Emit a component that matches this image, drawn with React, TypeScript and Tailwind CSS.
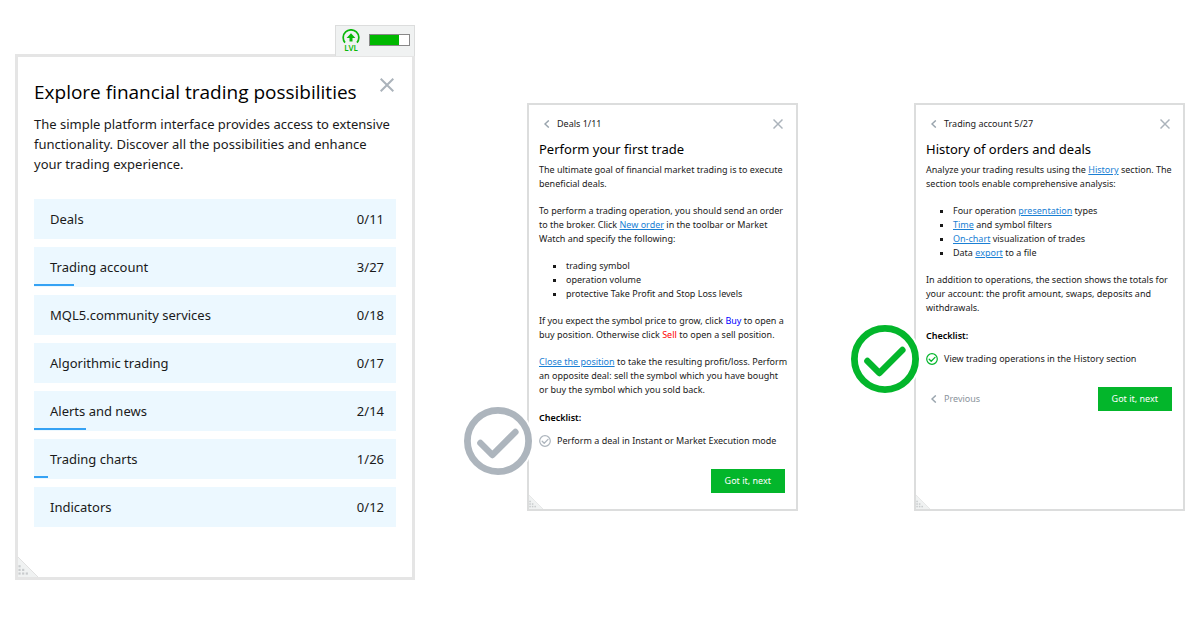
import { ReactNode } from 'react';

interface Topic {
  title: string;
  done: number;
  total: number;
}

const topics: Topic[] = [
  { title: 'Deals', done: 0, total: 11 },
  { title: 'Trading account', done: 3, total: 27 },
  { title: 'MQL5.community services', done: 0, total: 18 },
  { title: 'Algorithmic trading', done: 0, total: 17 },
  { title: 'Alerts and news', done: 2, total: 14 },
  { title: 'Trading charts', done: 1, total: 26 },
  { title: 'Indicators', done: 0, total: 12 },
];

function CloseIcon({ className }: { className: string }) {
  return (
    <svg className={className} viewBox="0 0 14 14" fill="none" stroke="#abb3bb" strokeWidth="2">
      <path d="M0.7 0.7l12.6 12.6M13.3 0.7L0.7 13.3" />
    </svg>
  );
}

function BackIcon() {
  return (
    <svg className="w-2 h-2 shrink-0" viewBox="0 0 8 8" fill="none" stroke="#9aa5ae" strokeWidth="1.4">
      <path d="M5.8 0.4L2 4l3.8 3.6" />
    </svg>
  );
}

function Grip({ className }: { className: string }) {
  return (
    <svg className={className} viewBox="0 0 22 22">
      <path d="M0 0l22 22H0z" fill="#f0f2f2" />
      <path d="M0 0l22 22" stroke="#dedede" />
      <g fill="#c8cbcd">
        <rect x="0.5" y="9" width="2.4" height="2.4" />
        <rect x="0.5" y="13" width="2.4" height="2.4" />
        <rect x="4.5" y="13" width="2.4" height="2.4" />
        <rect x="0.5" y="17" width="2.4" height="2.4" />
        <rect x="4.5" y="17" width="2.4" height="2.4" />
        <rect x="8.5" y="17" width="2.4" height="2.4" />
      </g>
    </svg>
  );
}

function CheckItem({ done, children }: { done: boolean; children: ReactNode }) {
  const color = done ? '#03b62b' : '#adb5bd';
  return (
    <li className="relative flex items-center gap-[6px]">
      <svg className="absolute -left-[77px] top-1/2 -translate-y-1/2 w-[72px] h-[72px]" viewBox="0 0 72 72" fill="none">
        <circle cx="36" cy="36" r="36" fill="#fff" />
        <circle cx="36" cy="36" r="30.6" stroke={color} strokeWidth="6.8" />
        <path d="M18.4 38l12 12 23-23" stroke={color} strokeWidth="6.4" strokeLinecap="round" strokeLinejoin="round" />
      </svg>
      <svg className="w-3 h-3 shrink-0" viewBox="0 0 12 12" fill="none" stroke={color}>
        <circle cx="6" cy="6" r="5.3" strokeWidth="1.2" />
        <path d="M3.2 6.3l2 2 3.8-3.9" strokeWidth="1.3" strokeLinecap="round" strokeLinejoin="round" />
      </svg>
      <span>{children}</span>
    </li>
  );
}

function TextLink({ children }: { children: ReactNode }) {
  return (
    <a href="#" className="text-[#1a7fd4] underline">
      {children}
    </a>
  );
}

function NextButton() {
  return (
    <button type="button" className="ml-auto h-6 px-[14px] bg-[#03b62b] text-white">
      Got it, next
    </button>
  );
}

interface LessonProps {
  section: string;
  title: string;
  children: ReactNode;
}

function Lesson({ section, title, children }: LessonProps) {
  return (
    <section className="relative flex-[271] min-w-0 border-2 border-[#dcdddd] pl-[10px] pr-[7px] pt-[11px] pb-4 text-[9px] leading-[14px] text-[#1a1a1a]">
      <div className="flex items-center justify-between h-4 pl-1 pr-[6px]">
        <button type="button" className="flex items-center gap-[6px]">
          <BackIcon />
          {section}
        </button>
        <button type="button" aria-label="Close">
          <CloseIcon className="w-[10px] h-[10px]" />
        </button>
      </div>
      <h2 className="mt-[7px] mb-1 text-[13px] leading-5 text-black">{title}</h2>
      {children}
      <Grip className="absolute left-0 bottom-0 w-[14px] h-[14px]" />
    </section>
  );
}

export default function App() {
  return (
    <main className="flex items-start bg-white px-[15px] pt-[25px] pb-12 font-['Noto_Sans',sans-serif]">
      <section className="flex-[400] min-w-0 flex flex-col">
        <div className="self-end relative z-10 -mb-[2px] flex items-center gap-[9px] h-[31px] w-20 pl-[6px] border border-b-0 border-[#dcdddd] bg-[#f0f2f2]">
          <svg className="w-[18px] h-6 shrink-0" viewBox="0 0 18 24" fill="none">
            <path d="M3 13.6A7.8 7.8 0 1 1 15 13.6" stroke="#0ab80a" strokeWidth="1.7" />
            <path d="M9 4.2l4.4 4.8h-2.9v3.6H7.5V9H4.6z" fill="#0ab80a" />
            <text x="9" y="21.6" textAnchor="middle" fontSize="8" fontWeight="600" fill="#0ab80a">
              LVL
            </text>
          </svg>
          <div className="w-[41px] h-3 mb-[2px] border border-[#888] bg-white">
            <div className="w-[29px] h-full bg-[#00b800]" />
          </div>
        </div>
        <div className="relative border-3 border-[#e5e5e5] px-4 pt-[21px] pb-[50px]">
          <div className="flex items-start justify-between">
            <h1 className="font-['Open_Sans',sans-serif] text-[19px] leading-7 text-black">
              Explore financial trading possibilities
            </h1>
            <button type="button" aria-label="Close" className="mr-[2px]">
              <CloseIcon className="w-[14px] h-[14px]" />
            </button>
          </div>
          <p className="mt-2 text-[13px] leading-5 text-[#1a1a1a]">
            The simple platform interface provides access to extensive functionality. Discover all the possibilities and
            enhance your trading experience.
          </p>
          <ul className="mt-[25px] flex flex-col gap-2 text-[13px]">
            {topics.map((topic) => (
              <li key={topic.title}>
                <button
                  type="button"
                  className="relative flex items-center justify-between w-full h-10 pl-4 pr-3 pt-px bg-[#ecf8ff] text-[#1a1a1a]"
                >
                  <span>{topic.title}</span>
                  <span>
                    {topic.done}/{topic.total}
                  </span>
                  <span
                    className="absolute left-0 bottom-px h-[2px] bg-[#35a2f4]"
                    style={{ width: `${(topic.done / topic.total) * 100}%` }}
                  />
                </button>
              </li>
            ))}
          </ul>
          <Grip className="absolute left-0 bottom-0 w-5 h-5" />
        </div>
      </section>

      <div className="flex-[658] min-w-0 ml-28 mt-[78px] flex gap-[116px]">
        <Lesson section="Deals 1/11" title="Perform your first trade">
          <div className="flex flex-col gap-[13px]">
            <p>The ultimate goal of financial market trading is to execute beneficial deals.</p>
            <p>
              To perform a trading operation, you should send an order to the broker. Click <TextLink>New order</TextLink>{' '}
              in the toolbar or Market Watch and specify the following:
            </p>
            <ul className="pl-[27px] list-[square]">
              <li>trading symbol</li>
              <li>operation volume</li>
              <li>protective Take Profit and Stop Loss levels</li>
            </ul>
            <p>
              If you expect the symbol price to grow, click <span className="text-[#0000ff]">Buy</span> to open a buy
              position. Otherwise click <span className="text-[#ff0000]">Sell</span> to open a sell position.
            </p>
            <p>
              <TextLink>Close the position</TextLink> to take the resulting profit/loss. Perform an opposite deal: sell
              the symbol which you have bought or buy the symbol which you sold back.
            </p>
          </div>
          <h3 className="mt-[14px] font-semibold text-black">Checklist:</h3>
          <ul className="mt-[9px]">
            <CheckItem done={false}>Perform a deal in Instant or Market Execution mode</CheckItem>
          </ul>
          <div className="mt-[21px] mr-1 flex items-center">
            <NextButton />
          </div>
        </Lesson>

        <Lesson section="Trading account 5/27" title="History of orders and deals">
          <div className="flex flex-col gap-[13px]">
            <p>
              Analyze your trading results using the <TextLink>History</TextLink> section. The section tools enable
              comprehensive analysis:
            </p>
            <ul className="pl-[27px] list-[square]">
              <li>
                Four operation <TextLink>presentation</TextLink> types
              </li>
              <li>
                <TextLink>Time</TextLink> and symbol filters
              </li>
              <li>
                <TextLink>On-chart</TextLink> visualization of trades
              </li>
              <li>
                Data <TextLink>export</TextLink> to a file
              </li>
            </ul>
            <p>
              In addition to operations, the section shows the totals for your account: the profit amount, swaps, deposits
              and withdrawals.
            </p>
          </div>
          <h3 className="mt-[14px] font-semibold text-black">Checklist:</h3>
          <ul className="mt-[9px]">
            <CheckItem done>View trading operations in the History section</CheckItem>
          </ul>
          <div className="mt-[21px] mr-1 flex items-center">
            <button type="button" className="flex items-center gap-[6px] pl-1 text-[#8a939b]">
              <BackIcon />
              Previous
            </button>
            <NextButton />
          </div>
        </Lesson>
      </div>
    </main>
  );
}
